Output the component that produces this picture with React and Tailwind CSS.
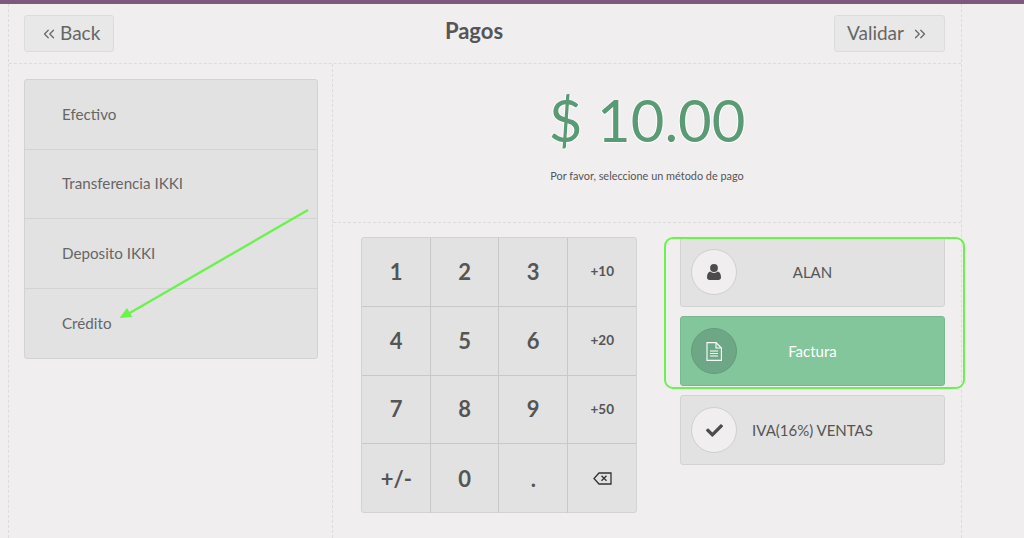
import { FaCheck } from "react-icons/fa";
import { ChevronsLeft, ChevronsRight } from "lucide-react";

const methods = ["Efectivo", "Transferencia IKKI", "Deposito IKKI", "Crédito"];

const keys = ["1", "2", "3", "+10", "4", "5", "6", "+20", "7", "8", "9", "+50", "+/-", "0", ".", "back"];

function BackspaceIcon() {
  return (
    <svg width="19" height="13" viewBox="0 0 19 13" fill="none" stroke="#333" strokeWidth="1.3">
      <path d="M6 1h12v11H6L1 6.5z" />
      <path d="M8.5 3.8l5 5M13.5 3.8l-5 5" />
    </svg>
  );
}

function UserIcon() {
  return (
    <svg width="14" height="16" viewBox="0 0 14 16" fill="currentColor">
      <circle cx="7" cy="4" r="3.9" />
      <path d="M0 13.2C0 10.4 1 8.4 3.2 7.6 4.2 8.5 5.5 9 7 9s2.8-.5 3.8-1.4C13 8.4 14 10.4 14 13.2 14 15 12.9 16 11.4 16H2.6C1.1 16 0 15 0 13.2z" />
    </svg>
  );
}

function FileIcon() {
  return (
    <svg width="16" height="19" viewBox="0 0 16 19" fill="none" stroke="currentColor" strokeWidth="1.1">
      <path d="M1 .6h9l5.4 5.4v12.4H1z" />
      <path d="M10 .6V6h5.4" />
      <path d="M4 9h8M4 11.5h8M4 14h8" />
    </svg>
  );
}

function NumKey({ k }) {
  const small = k.startsWith("+") && k !== "+/-";
  return (
    <button
      className={`flex items-center justify-center h-[68.75px] pb-[1px] pl-[1px] border-r border-b border-[#c8c8c8] [&:nth-child(4n)]:border-r-0 [&:nth-child(n+13)]:border-b-0 text-[#555] ${
        small ? "text-[13.5px] font-bold" : "text-[22px] font-bold"
      }`}
    >
      {k === "back" ? <BackspaceIcon /> : k}
    </button>
  );
}

function ActionButton({ icon, label, active }) {
  return (
    <button
      className={`relative flex items-center justify-center w-[265px] h-[70px] rounded-[3px] border text-[15px] ${
        active
          ? "bg-[#84c69b] border-[#7ab990] text-white"
          : "bg-[#e2e2e2] border-[#d3d3d3] text-[#555]"
      }`}
    >
      <span
        className={`absolute left-[10px] top-[11px] flex items-center justify-center w-[46px] h-[46px] rounded-full border ${
          active ? "bg-[#6ea785] border-[#659c7b] text-white" : "bg-[#f0eeee] border-[#cfcfcf] text-[#4c4c4c]"
        }`}
      >
        {icon}
      </span>
      {label}
    </button>
  );
}

export default function App() {
  return (
    <div className="relative w-[1024px] h-[538px] overflow-hidden bg-[#f0eeef] text-[#555] font-['Lato',sans-serif]">
      <div className="h-[4px] bg-[#7c5a7c]" />

      <div className="ml-[8px] w-[954px] h-[534px] border-x border-dashed border-[#dcdcdc]">
        {/* top bar */}
        <div className="flex items-center justify-between h-[60px] pl-[15px] pr-[16px] border-b border-dashed border-[#dcdcdc]">
          <button className="flex items-center gap-[2px] w-[90px] h-[37px] pl-[15px] rounded-[3px] border border-[#dcdcdc] bg-[#e8e8e8] text-[19px] text-[#666]">
            <ChevronsLeft size={18} strokeWidth={1.6} />
            Back
          </button>
          <h1 className="text-[22px] font-bold text-[#555] -mt-[6px]">Pagos</h1>
          <button className="flex items-center gap-[7px] w-[111px] h-[37px] pl-[12px] rounded-[3px] border border-[#dcdcdc] bg-[#e8e8e8] text-[19px] text-[#666]">
            Validar
            <ChevronsRight size={18} strokeWidth={1.6} />
          </button>
        </div>

        <div className="flex h-[474px]">
          {/* payment methods */}
          <div className="w-[324px] pl-[15px] pt-[15px] border-r border-dashed border-[#dcdcdc]">
            <div className="w-[294px] rounded-[3px] border border-[#d3d3d3] bg-[#e2e2e2]">
              {methods.map((m) => (
                <div
                  key={m}
                  className="flex items-center h-[69.5px] pl-[37px] border-b border-[#d3d3d3] last:border-b-0 text-[15.2px] text-[#666]"
                >
                  {m}
                </div>
              ))}
            </div>
          </div>

          <div className="flex-1">
            {/* amount */}
            <div className="flex flex-col items-center h-[159px] pt-[18px] border-b border-dashed border-[#dcdcdc]">
              <div className="text-[58px] leading-[76px] text-[#5a9a74] [text-shadow:0_1px_1px_#fff,1px_0_1px_#fff,-1px_0_1px_#fff]">
                $ 10.00
              </div>
              <p className="mt-[10px] text-[10.9px] text-[#555]">Por favor, seleccione un método de pago</p>
            </div>

            <div className="flex pl-[28px] pt-[14px]">
              {/* numpad */}
              <div className="grid grid-cols-4 w-[276px] h-[276px] rounded-[3px] border border-[#d3d3d3] bg-[#e2e2e2]">
                {keys.map((k) => (
                  <NumKey key={k} k={k} />
                ))}
              </div>

              <div className="flex flex-col gap-[9px] ml-[43px]">
                <ActionButton icon={<UserIcon />} label="ALAN" />
                <ActionButton icon={<FileIcon />} label="Factura" active />
                <ActionButton icon={<FaCheck size={17} />} label="IVA(16%) VENTAS" />
              </div>
            </div>
          </div>
        </div>
      </div>

      {/* annotation over the screenshot */}
      <div className="absolute left-[664px] top-[237px] w-[301px] h-[152px] rounded-[9px] border-2 border-[#6cf24f]" />
      <svg className="absolute left-0 top-0" width="1024" height="538" fill="none">
        <path d="M308 210L128 314" stroke="#6cf24f" strokeWidth="2.4" />
        <path d="M119.5 318L127 308L132.5 317z" fill="#6cf24f" />
      </svg>
    </div>
  );
}
